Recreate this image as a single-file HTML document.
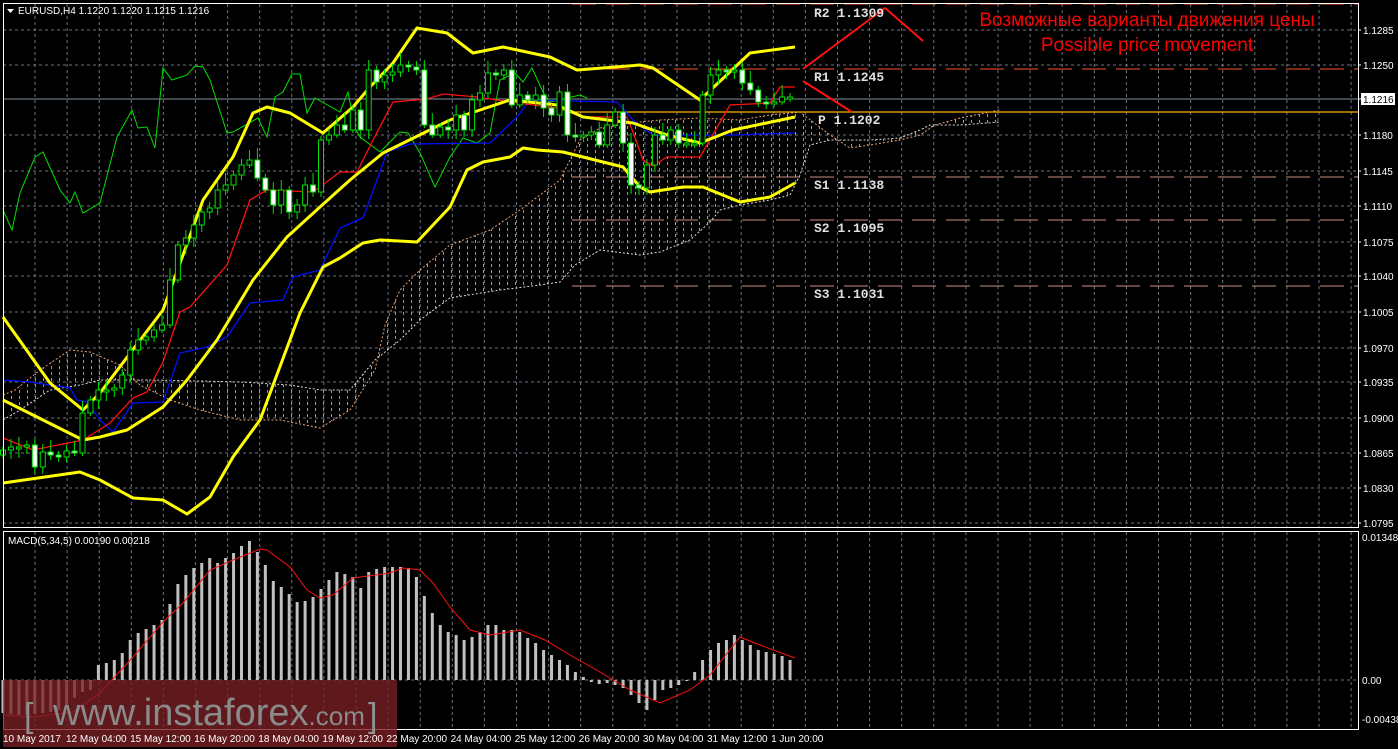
<!DOCTYPE html>
<html><head><meta charset="utf-8">
<style>
html,body{margin:0;padding:0;background:#000;width:1398px;height:749px;overflow:hidden}
svg{display:block}
</style></head><body>
<svg id="s" width="1398" height="749" xmlns="http://www.w3.org/2000/svg" font-family="Liberation Sans, sans-serif">
<defs>
<pattern id="hatch" width="8" height="6" patternUnits="userSpaceOnUse">
<rect x="3" y="0" width="1" height="3" fill="#e0a070"/>
</pattern>
</defs>
<rect width="1398" height="749" fill="#000"/>
<g id="grid"></g>
<polygon fill="url(#hatch)" opacity="0.9" points="3,395 15,390 40,370 70,350 90,352 120,365 140,385 170,400 200,410 240,420 280,420 320,428 350,410 375,370 385,325 400,290 420,270 450,245 490,230 520,210 540,195 560,180 580,140 600,128 620,125 640,122 660,120 700,118 740,120 770,115 800,112 830,135 850,148 870,145 900,140 920,135 935,125 960,118 990,112 1000,110 1000,122 960,125 930,125 920,130 900,138 870,140 830,140 810,145 800,175 790,195 770,200 740,205 720,210 710,222 690,240 660,252 640,255 600,250 575,265 560,282 540,285 500,290 450,298 420,320 400,340 375,360 350,390 320,390 290,385 240,382 200,381 150,380 100,380 80,385 50,390 20,410 3,420"/>
<polyline fill="none" stroke="#e8a070" stroke-width="1" stroke-dasharray="2,2" points="3,395 15,390 40,370 70,350 90,352 120,365 140,385 170,400 200,410 240,420 280,420 320,428 350,410 375,370 385,325 400,290 420,270 450,245 490,230 520,210 540,195 560,180 580,140 600,128 620,125 640,122 660,120 700,118 740,120 770,115 800,112 830,135 850,148 870,145 900,140 920,135 935,125 960,118 990,112 1000,110"/>
<polyline fill="none" stroke="#e0d8d0" stroke-width="1" stroke-dasharray="2,2" points="3,420 20,410 50,390 80,385 100,380 150,380 200,381 240,382 290,385 320,390 350,390 375,360 400,340 420,320 450,298 500,290 540,285 560,282 575,265 600,250 640,255 660,252 690,240 710,222 720,210 740,205 770,200 790,195 800,175 810,145 830,140 870,140 900,138 920,130 930,125 960,125 1000,122"/>
<line x1="572" y1="4" x2="1358" y2="4" stroke="#ff5020" stroke-dasharray="24,10"/>
<line x1="572" y1="69" x2="1358" y2="69" stroke="#ff5020" stroke-dasharray="24,10"/>
<line x1="3" y1="99" x2="1358" y2="99" stroke="#8090a0" stroke-width="1"/>
<line x1="572" y1="112" x2="1358" y2="112" stroke="#ffb000" stroke-width="1.3"/>
<line x1="572" y1="177" x2="1358" y2="177" stroke="#c89080" stroke-dasharray="24,10"/>
<line x1="572" y1="220" x2="1358" y2="220" stroke="#c89080" stroke-dasharray="24,10"/>
<line x1="572" y1="286" x2="1358" y2="286" stroke="#c89080" stroke-dasharray="24,10"/>
<polyline fill="none" stroke="#00e000" stroke-width="1" points="3,210 12,230 20,193 35,157 43,152 60,190 70,203 75,192 83,213 100,203 117,137 132,110 138,128 147,127 155,148 163,68 172,80 187,75 195,66 203,67 210,80 227,133 233,132 258,118 267,137 275,97 283,92 292,74 300,74 307,113 315,98 340,112 348,92 355,128 360,137 380,152 400,132 408,133 420,153 435,187 450,157 463,138 477,143 490,133 500,80 515,73 523,82 532,68 543,92 550,102 580,95 587,98"/>
<polyline fill="none" stroke="#0010ff" stroke-width="1.3" points="3,380 30,382 70,388 77,400 87,402 100,420 113,432 133,403 163,402 180,353 207,347 227,337 250,303 283,300 293,277 320,270 340,228 363,218 377,180 387,152 410,144 490,143 517,117 530,100 617,102 633,120 653,135 733,135 795,133"/>
<polyline fill="none" stroke="#ff1010" stroke-width="1.3" points="3,438 33,450 83,440 110,423 133,398 147,392 163,362 180,312 190,307 227,265 250,200 267,190 313,192 340,172 357,172 373,140 393,102 427,99 443,94 477,97 517,103 557,108 583,117 627,117 633,132 643,160 653,166 667,157 700,157 730,105 770,103 780,87 795,87"/>
<polyline fill="none" stroke="#ffff00" stroke-width="3" stroke-linejoin="round" points="3,317 50,383 83,410 100,393 163,310 203,200 233,157 253,113 267,107 290,113 323,133 353,107 370,87 393,63 417,28 447,33 473,53 503,47 550,57 577,70 640,65 653,68 700,100 750,53 795,47"/>
<polyline fill="none" stroke="#ffff00" stroke-width="3" stroke-linejoin="round" points="3,400 83,440 100,437 127,430 163,407 187,380 217,340 253,280 287,237 320,207 350,180 383,153 450,120 510,100 557,105 583,117 633,123 667,135 700,143 733,130 795,117"/>
<polyline fill="none" stroke="#ffff00" stroke-width="3" stroke-linejoin="round" points="3,483 80,472 100,480 133,498 163,500 187,514 210,497 233,457 260,420 300,313 323,267 340,258 363,243 380,240 417,242 450,207 467,170 483,162 510,157 523,148 537,150 563,152 583,157 623,167 640,187 650,192 683,187 703,187 740,202 770,197 795,183"/>
<g id="candles"></g>
<polyline fill="none" stroke="#ff1010" stroke-width="2" points="803,69 885,8 923,41"/>
<line x1="803" y1="81" x2="852" y2="112" stroke="#ff1010" stroke-width="2"/>
<g font-family="Liberation Mono, monospace" font-size="13" fill="#e0e0e0" font-weight="bold">
<text x="814" y="17">R2 1.1309</text>
<text x="814" y="81">R1 1.1245</text>
<text x="818" y="124">P 1.1202</text>
<text x="814" y="189">S1 1.1138</text>
<text x="814" y="232">S2 1.1095</text>
<text x="814" y="298">S3 1.1031</text>
</g>
<text x="1147" y="26" font-size="19" fill="#ff0000" text-anchor="middle">Возможные варианты движения цены</text>
<text x="1147" y="51" font-size="19" fill="#ff0000" text-anchor="middle">Possible price movement</text>
<g id="macd"></g>
<polyline fill="none" stroke="#ff1010" stroke-width="1" points="3,715 33,717 73,712 100,693 133,657 163,622 183,603 210,570 233,560 260,549 267,550 290,567 307,590 320,598 333,595 353,578 390,573 403,568 420,570 433,583 450,607 470,630 490,635 520,630 545,640 570,655 600,672 630,690 660,703 690,690 710,675 740,637 760,645 795,658"/>
<rect x="3.5" y="3.5" width="1355" height="524" fill="none" stroke="#fff" stroke-width="1"/>
<rect x="3.5" y="531.5" width="1355" height="198" fill="none" stroke="#fff" stroke-width="1"/>
<rect x="3" y="680" width="394" height="67" fill="#7a2025" opacity="0.78"/>
<text x="24" y="727" font-size="34" fill="#909090" transform="scale(1,1)">[</text>
<text x="53" y="725" font-size="38" fill="#8a8a8a">www.instaforex<tspan font-size="26">.com</tspan></text>
<text x="368" y="727" font-size="34" fill="#909090">]</text>
<polygon points="7,9 14,9 10.5,13" fill="#fff"/>
<text x="18" y="14" font-size="10" fill="#fff">EURUSD,H4  1.1220 1.1220 1.1215 1.1216</text>
<text x="8" y="544" font-size="10" fill="#fff">MACD(5,34,5) 0.00190 0.00218</text>
<g id="axis" font-size="10" fill="#fff"></g>
<rect x="1361" y="93" width="34" height="12" fill="#fff"/>
<text x="1363" y="103" font-size="10" fill="#000">1.1216</text>
</svg>
<script>
(function(){
var NS="http://www.w3.org/2000/svg";
function el(p,t,a,txt){var e=document.createElementNS(NS,t);for(var k in a)e.setAttribute(k,a[k]);if(txt)e.textContent=txt;document.getElementById(p).appendChild(e);return e;}
var labs=["1.1285","1.1250","1.1216","1.1180","1.1145","1.1110","1.1075","1.1040","1.1005","1.0970","1.0935","1.0900","1.0865","1.0830","1.0795"];
var ys=[30,65,99,135,171,206,242,276,312,348,382,418,453,488,523];
for(var i=0;i<ys.length;i++){
 if(i!=2){el("grid","line",{x1:3,x2:1358,y1:ys[i],y2:ys[i],stroke:"#6a7480","stroke-dasharray":"3,3"});
 el("axis","text",{x:1363,y:ys[i]+4},labs[i]);}
 el("axis","line",{x1:1358,x2:1361,y1:ys[i],y2:ys[i],stroke:"#fff"});
}
for(var gx=35;gx<1358;gx+=32.1){el("grid","line",{x1:gx,x2:gx,y1:4,y2:528,stroke:"#6a7480","stroke-dasharray":"3,3"});el("grid","line",{x1:gx,x2:gx,y1:532,y2:729,stroke:"#6a7480","stroke-dasharray":"3,3"});}
el("grid","line",{x1:3,x2:1358,y1:680,y2:680,stroke:"#6a7480","stroke-dasharray":"3,3"});
el("axis","text",{x:1362,y:541},"0.01348");
el("axis","text",{x:1362,y:684},"0.00");
el("axis","text",{x:1362,y:723},"-0.00438");
var dates=["10 May 2017","12 May 04:00","15 May 12:00","16 May 20:00","18 May 04:00","19 May 12:00","22 May 20:00","24 May 04:00","25 May 12:00","26 May 20:00","30 May 04:00","31 May 12:00","1 Jun 20:00"];
for(var i=0;i<dates.length;i++){var dx=i==0?3:66+(i-1)*64.1;el("axis","text",{x:dx,y:742},dates[i]);}
var c=[450,447,447,445,467,452,455,457,451,453,413,400,390,390,388,375,350,340,337,330,325,280,245,238,225,212,208,190,185,175,165,160,178,190,205,190,212,205,185,192,140,135,125,130,110,130,70,82,75,72,65,67,70,125,135,127,130,115,130,100,93,73,75,70,105,95,100,95,108,115,92,135,137,135,132,145,125,112,143,185,188,165,135,140,130,143,143,143,95,75,70,72,70,83,90,102,103,102,97,97];
var op=455;
for(var i=0;i<c.length;i++){
 var cx=3+i*7.95, cl=c[i], hi=Math.min(op,cl), lo=Math.max(op,cl);
 if(lo-hi<2){lo=hi+2;}
 var w=(i*7)%11;
 el("candles","line",{x1:cx,x2:cx,y1:hi-4-(w%5)*2,y2:lo+3+(w%4)*2,stroke:"#00e000"});
 var bear=cl>op;
 el("candles","rect",{x:cx-2.5,y:hi,width:5,height:lo-hi,fill:bear?"#fff":"#000",stroke:"#00e000","stroke-width":1});
 op=cl;
}
var m=[713,714,715,715,714,713,712,710,705,698,692,690,665,663,660,653,640,633,629,625,620,604,584,575,568,563,558,563,558,553,546,541,552,565,581,587,594,602,601,597,589,580,572,574,577,588,572,569,567,567,567,568,577,596,613,625,632,635,640,637,632,625,625,630,630,632,638,643,650,655,660,665,672,677,682,684,683,685,688,695,703,710,700,690,688,685,680,672,660,650,643,640,635,640,645,650,652,654,656,660];
for(var i=0;i<m.length;i++){var mx=3+i*7.95;var t=Math.min(m[i],680),b=Math.max(m[i],680);el("macd","rect",{x:mx-1.5,y:t,width:3,height:Math.max(b-t,1),fill:"#c0c0c0"});}
})();
</script>
</body></html>
